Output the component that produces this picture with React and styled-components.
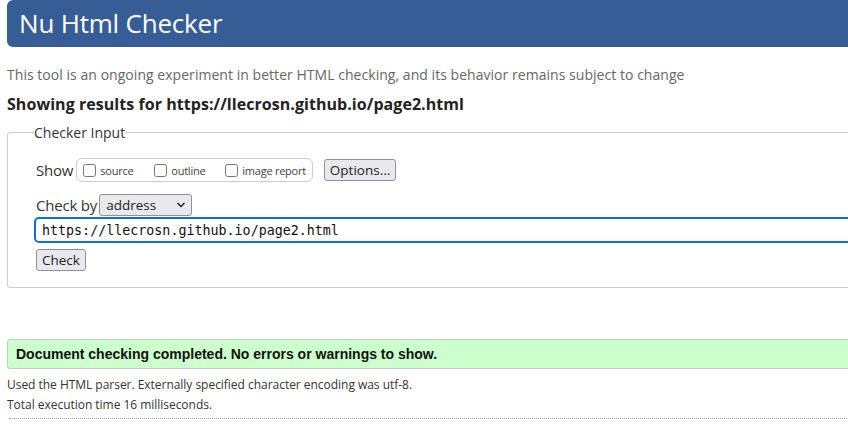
import React from 'react'
import styled, { createGlobalStyle } from 'styled-components'

const GlobalStyle = createGlobalStyle`
  html, body {
    margin: 0;
    padding: 0;
    background: #fff;
    overflow: hidden;
  }
  body {
    font-family: "Open Sans", "Noto Sans", sans-serif;
    color: #222;
  }
`

const Page = styled.div`
  width: 880px;
  padding: 0 0 0 7px;
`

const Header = styled.h1`
  margin: 0;
  height: 47px;
  background: #365d95;
  border-radius: 6px;
  color: #fff;
  font-weight: 400;
  font-size: 26px;
  line-height: 47px;
  padding-left: 12px;
  letter-spacing: -0.2px;
`

const Intro = styled.p`
  margin: 18px 0 0;
  font-size: 14px;
  line-height: 20px;
  color: #666;
  letter-spacing: 0.04px;
`

const Results = styled.h2`
  margin: 8px 0 0;
  font-size: 16px;
  line-height: 22px;
  font-weight: 700;
  color: #222;
  letter-spacing: 0.05px;
`

const Fieldset = styled.fieldset`
  margin: 8px 0 0;
  border: 1px solid #ccc;
  border-radius: 3px;
  padding: 4px 0 16px 26px;
  min-width: 0;
`

const Legend = styled.legend`
  font-size: 14px;
  color: #333;
  padding: 0;
  margin-left: 0;
  letter-spacing: 0;
`

const Row = styled.div`
  display: flex;
  align-items: center;
  margin-top: ${p => p.$mt || 0}px;
  padding-left: ${p => p.$pl || 0}px;
`

const Label = styled.span`
  font-size: 15px;
  color: #333;
  letter-spacing: -0.2px;
  margin-right: 2px;
`

const Group = styled.div`
  display: flex;
  align-items: center;
  height: 22px;
  border: 1px solid #ccc;
  border-radius: 6px;
  padding: 0 6px 0 6px;
  margin-left: 1px;
`

const Check = styled.label`
  display: flex;
  align-items: center;
  font-size: 11px;
  color: #444;
  letter-spacing: -0.25px;
  margin-right: ${p => p.$mr || 0}px;
  input {
    margin: 0 4px 0 0;
    width: 13px;
    height: 13px;
  }
`

const Button = styled.button`
  font-family: "Open Sans", "Noto Sans", sans-serif;
  font-size: 13.5px;
  color: #222;
  background: #e9e9ed;
  border: 1px solid #8f8f9d;
  border-radius: 3px;
  height: 22px;
  padding: 0 5px;
  margin-left: ${p => p.$ml || 0}px;
  letter-spacing: 0;
`

const Select = styled.div`
  display: flex;
  align-items: center;
  justify-content: space-between;
  width: 80px;
  height: 20px;
  margin-left: 0;
  padding: 0 5px 0 6px;
  background: #e9e9ed;
  border: 1px solid #8f8f9d;
  border-radius: 3px;
  font-size: 13.5px;
  color: #222;
`

const UrlInput = styled.div`
  margin-top: 1px;
  height: 22px;
  border: 2px solid #0b6fd8;
  border-radius: 5px;
  padding-left: 6px;
  display: flex;
  align-items: center;
  font-family: "DejaVu Sans Mono", monospace;
  font-size: 13.33px;
  color: #111;
`

const Message = styled.div`
  margin-top: 51px;
  height: 28px;
  background: #ccffcc;
  border: 1px solid #c8c8c8;
  border-radius: 3px;
  display: flex;
  align-items: center;
  padding-left: 8px;
  font-family: "Liberation Sans", Arial, sans-serif;
  font-weight: 700;
  font-size: 14px;
  color: #111;
`

const Details = styled.p`
  margin: ${p => p.$mt || 0}px 0 0;
  font-size: 12px;
  line-height: 20px;
  color: #333;
  letter-spacing: -0.03px;
`

const Rule = styled.hr`
  margin: 3px 0 0 2px;
  border: 0;
  border-top: 1px dotted #999;
`

const Chevron = () => (
  <svg width="10" height="6" viewBox="0 0 10 6">
    <path d="M1.5 1 L5 4.5 L8.5 1" fill="none" stroke="#222" strokeWidth="1.5" />
  </svg>
)

export default function App() {
  return (
    <>
      <GlobalStyle />
      <Page>
        <Header>Nu Html Checker</Header>
        <Intro>This tool is an ongoing experiment in better HTML checking, and its behavior remains subject to change</Intro>
        <Results>Showing results for https://llecrosn.github.io/page2.html</Results>
        <Fieldset>
          <Legend>Checker Input</Legend>
          <Row $mt={12} $pl={2}>
            <Label>Show</Label>
            <Group>
              <Check $mr={21}><input type="checkbox" />source</Check>
              <Check $mr={20}><input type="checkbox" />outline</Check>
              <Check><input type="checkbox" />image report</Check>
            </Group>
            <Button $ml={11}>Options...</Button>
          </Row>
          <Row $mt={12} $pl={2}>
            <Label>Check by</Label>
            <Select>address<Chevron /></Select>
          </Row>
          <UrlInput>https://llecrosn.github.io/page2.html</UrlInput>
          <Row $mt={6} $pl={2}>
            <Button>Check</Button>
          </Row>
        </Fieldset>
        <Message>Document checking completed. No errors or warnings to show.</Message>
        <Details $mt={6}>Used the HTML parser. Externally specified character encoding was utf-8.</Details>
        <Details>Total execution time 16 milliseconds.</Details>
        <Rule />
      </Page>
    </>
  )
}
